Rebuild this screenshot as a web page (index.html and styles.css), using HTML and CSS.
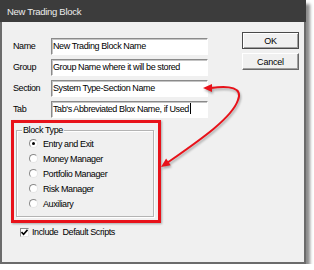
FILE: index.html
```html
<!DOCTYPE html>
<html lang="en">
<head>
    <meta charset="UTF-8">
    <title>New Trading Block</title>
    <link rel="stylesheet" href="styles.css">
</head>
<body>
    <div class="dialog">
        <div class="titlebar">New Trading Block</div>
        <div class="dialog-body">
            <div class="main-col">
                <div class="form-grid">
                    <label class="field-label">Name</label>
                    <div class="text-field">New Trading Block Name</div>
                    <label class="field-label">Group</label>
                    <div class="text-field">Group Name where it will be stored</div>
                    <label class="field-label">Section</label>
                    <div class="text-field">System Type-Section Name</div>
                    <label class="field-label">Tab</label>
                    <div class="text-field">Tab's Abbreviated Blox Name, if Used<span class="caret"></span></div>
                </div>

                <div class="highlight-box">
                    <fieldset class="group-box">
                        <legend>Block Type</legend>
                        <div class="radio-list">
                            <div class="radio-row"><span class="radio checked"></span>Entry and Exit</div>
                            <div class="radio-row"><span class="radio"></span>Money Manager</div>
                            <div class="radio-row"><span class="radio"></span>Portfolio Manager</div>
                            <div class="radio-row"><span class="radio"></span>Risk Manager</div>
                            <div class="radio-row"><span class="radio"></span>Auxiliary</div>
                        </div>
                    </fieldset>
                </div>

                <div class="check-row">
                    <span class="checkbox">
                        <svg width="7" height="7" viewBox="0 0 7 7"><path d="M0.5 3 L2.6 5.2 L6.5 0.8" fill="none" stroke="#000" stroke-width="1.6"/></svg>
                    </span>
                    Include&nbsp; Default Scripts
                </div>
            </div>

            <div class="button-col">
                <button class="win-button default-button">OK</button>
                <button class="win-button">Cancel</button>
            </div>
        </div>
    </div>

    <!-- annotation arrow drawn over the dialog -->
    <svg class="annotation" width="314" height="270" viewBox="0 0 314 270">
        <path d="M211 88 C230 85, 243 88, 238 100 C232 118, 200 140, 167 163" fill="none" stroke="#e8121a" stroke-width="2"/>
        <polygon points="203,88 212,84 212,92" fill="#e8121a"/>
        <polygon points="161,167 170.7,165.2 166.1,158.6" fill="#e8121a"/>
    </svg>
</body>
</html>
```

FILE: styles.css
```css
body {
    margin: 0;
    padding: 0;
    background-color: #fff;
    font-family: "Liberation Sans", Arial, sans-serif;
    font-size: 9px;
    letter-spacing: -0.4px;
    color: #000;
    position: relative;
}

.dialog {
    width: 306px;
    height: 264px;
    box-sizing: border-box;
    background-color: #f0f0f0;
    border: 2px solid #6b6b6b;
    border-top: none;
    box-shadow: 4px 4px 3px rgba(0, 0, 0, 0.45);
}

.titlebar {
    height: 22px;
    margin: 0 -2px;
    padding-left: 7px;
    line-height: 23px;
    background-color: #3c3c3c;
    color: #ececec;
    font-size: 9.5px;
    letter-spacing: -0.3px;
}

.dialog-body {
    display: flex;
    padding: 10px 5px 0 9px;
}

.main-col {
    width: 200px;
}

.form-grid {
    display: grid;
    grid-template-columns: 38px 157px;
    row-gap: 4px;
    margin: 6px 0 0 2px;
}

.field-label {
    line-height: 17px;
}

.text-field {
    height: 17px;
    box-sizing: border-box;
    padding-left: 1px;
    line-height: 15px;
    background-color: #fff;
    border: 1px solid;
    border-color: #8a8a8a #fff #fff #8a8a8a;
    box-shadow: inset 1px 1px 0 #c4c4c4;
    white-space: nowrap;
    overflow: hidden;
}

.caret {
    display: inline-block;
    width: 0;
    height: 11px;
    margin-left: 1px;
    border-left: 1px solid #000;
    vertical-align: -2px;
}

/* red annotation frame around the group box */
.highlight-box {
    width: 150px;
    height: 103px;
    box-sizing: border-box;
    margin-top: 2px;
    border: 3px solid #e8121a;
    box-shadow: 1px 1px 2px rgba(0, 0, 0, 0.3);
    padding: 1px 0 0 2px;
}

.group-box {
    width: 138px;
    height: 93px;
    box-sizing: border-box;
    margin: 0;
    padding: 0 0 0 5px;
    border: 1px solid #b4b4b4;
    box-shadow: inset 1px 1px 0 #fff, 1px 1px 0 #fff;
}

.group-box legend {
    padding: 0 1px;
    line-height: 12px;
    background-color: #f0f0f0;
}

.radio-list {
    padding-left: 7px;
}

.radio-row {
    display: flex;
    align-items: center;
    height: 15px;
}

.radio {
    width: 9px;
    height: 9px;
    box-sizing: border-box;
    margin-right: 5px;
    border-radius: 50%;
    background-color: #fff;
    border: 1px solid;
    border-color: #8a8a8a #e6e6e6 #e6e6e6 #8a8a8a;
    display: flex;
    align-items: center;
    justify-content: center;
}

.radio.checked::after {
    content: "";
    width: 3px;
    height: 3px;
    border-radius: 50%;
    background-color: #000;
}

.check-row {
    display: flex;
    align-items: center;
    height: 10px;
    margin: 4px 0 0 9px;
}

.checkbox {
    width: 9px;
    height: 9px;
    box-sizing: border-box;
    margin-right: 3px;
    background-color: #fff;
    border: 1px solid;
    border-color: #8a8a8a #e6e6e6 #e6e6e6 #8a8a8a;
    display: flex;
    align-items: center;
    justify-content: center;
}

.button-col {
    margin-left: auto;
    display: flex;
    flex-direction: column;
    gap: 4px;
}

.win-button {
    width: 57px;
    height: 17px;
    padding: 0;
    font-family: inherit;
    font-size: 9px;
    letter-spacing: -0.2px;
    color: #000;
    background-color: #f0f0f0;
    border: 1px solid;
    border-color: #fff #696969 #696969 #fff;
    box-shadow: inset -1px -1px 0 #a0a0a0;
}

.default-button {
    border-color: #4a4a4a;
    box-shadow: inset 1px 1px 0 #fff, inset -1px -1px 0 #a0a0a0;
}

.annotation {
    position: absolute;
    left: 0;
    top: 0;
    filter: drop-shadow(1px 2px 1px rgba(0, 0, 0, 0.3));
}
```
